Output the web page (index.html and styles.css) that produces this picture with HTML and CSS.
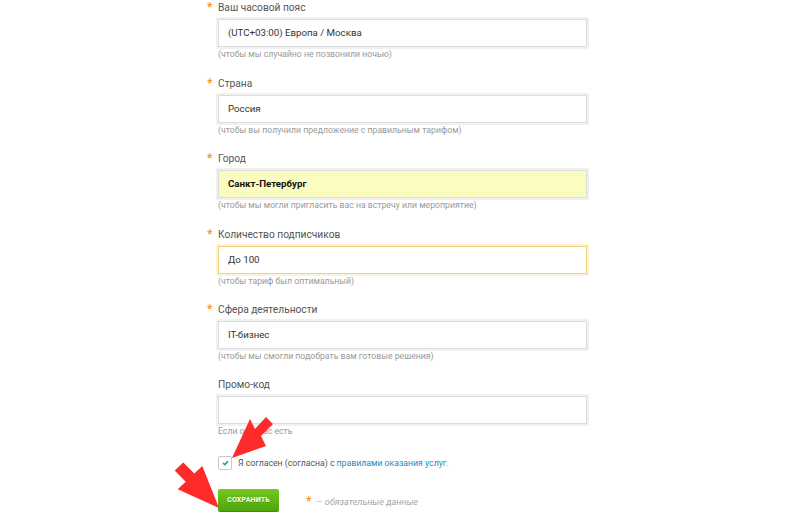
FILE: index.html
```html
<!DOCTYPE html>
<html lang="ru">
<head>
    <meta charset="UTF-8">
    <meta name="viewport" content="width=device-width, initial-scale=1.0">
    <title>Профиль</title>
    <link rel="stylesheet" href="styles.css">
</head>
<body>

    <form class="profile-form">
        <div class="field">
            <div class="field-label required">Ваш часовой пояс</div>
            <div class="field-input">(UTC+03:00) Европа / Москва</div>
            <div class="field-hint">(чтобы мы случайно не позвонили ночью)</div>
        </div>
        <div class="field">
            <div class="field-label required">Страна</div>
            <div class="field-input">Россия</div>
            <div class="field-hint">(чтобы вы получили предложение с правильным тарифом)</div>
        </div>
        <div class="field">
            <div class="field-label required">Город</div>
            <div class="field-input autofill">Санкт-Петербург</div>
            <div class="field-hint">(чтобы мы могли пригласить вас на встречу или мероприятие)</div>
        </div>
        <div class="field">
            <div class="field-label required">Количество подписчиков</div>
            <div class="field-input focused">До 100</div>
            <div class="field-hint">(чтобы тариф был оптимальный)</div>
        </div>
        <div class="field">
            <div class="field-label required">Сфера деятельности</div>
            <div class="field-input">IT-бизнес</div>
            <div class="field-hint">(чтобы мы смогли подобрать вам готовые решения)</div>
        </div>
        <div class="field">
            <div class="field-label">Промо-код</div>
            <div class="field-input"></div>
            <div class="field-hint">Если он у вас есть</div>
        </div>

        <label class="agree">
            <span class="checkbox">
                <svg width="7" height="6" viewBox="0 0 7 6"><path d="M1 3 L2.8 4.6 L6 1.2" fill="none" stroke="#20a85a" stroke-width="1.6"/></svg>
            </span>
            Я согласен (согласна) с&nbsp;<a href="#" class="rules-link">правилами оказания услуг.</a>
        </label>

        <div class="form-footer">
            <button type="button" class="save-button">СОХРАНИТЬ</button>
            <span class="required-note"><span class="star">*</span> — обязательные данные</span>
        </div>
    </form>

    <!-- red annotation arrows drawn over the form -->
    <svg class="arrows" width="800" height="517" viewBox="0 0 800 517">
        <polygon fill="#ff2a2a" points="219,508 177.7,489.3 185.7,481.7 174.7,470.6 183.3,462.4 194.3,473.5 202.3,465.9"/>
        <polygon fill="#ff2a2a" points="232,458 250,419 255,429 266,417 273,424 261,436 266,446"/>
    </svg>

</body>
</html>
```

FILE: styles.css
```css
body {
    margin: 0;
    background-color: #fff;
    font-family: Roboto, "Noto Sans", Arial, sans-serif;
    color: #444;
}

.profile-form {
    width: 369px;
    margin: 0 auto;
    padding-left: 5px;
}

.field {
    height: 75.5px;
}

.field-label {
    font-size: 10.2px;
    line-height: 14px;
    color: #555;
    margin-bottom: 4px;
}

.required::before {
    content: "*";
    display: inline-block;
    width: 11px;
    margin-left: -11px;
    color: #f7941d;
    font-weight: bold;
    font-size: 12px;
}

.field-input {
    box-sizing: border-box;
    height: 28px;
    border: 1px solid #dcdcdc;
    box-shadow: 0 0 0 2px #f1f1f1;
    padding: 0 9px;
    font-size: 9.7px;
    line-height: 26px;
    color: #333;
    background-color: #fff;
}

/* browser autofill look */
.field-input.autofill {
    background-color: #fafcc0;
    font-weight: bold;
    color: #111;
}

.field-input.focused {
    border-color: #f3d27f;
    box-shadow: 0 0 0 2px #fdf3d8;
}

.field-hint {
    font-size: 8.7px;
    line-height: 14px;
    color: #9a9a9a;
}

.agree {
    display: flex;
    align-items: center;
    margin-top: 3px;
    font-size: 8.7px;
    color: #555;
}

.checkbox {
    box-sizing: border-box;
    width: 14px;
    height: 14px;
    border: 1px solid #c8c8c8;
    border-radius: 2px;
    display: flex;
    align-items: center;
    justify-content: center;
    margin-right: 6px;
}

.rules-link {
    color: #1a8cc0;
    text-decoration: none;
}

.form-footer {
    display: flex;
    align-items: center;
    margin-top: 19px;
}

.save-button {
    width: 61px;
    height: 23px;
    border: none;
    border-bottom: 1px solid #3d8e0a;
    border-radius: 2px;
    background: linear-gradient(#74c81f, #4ea50c);
    color: #fff;
    font-family: Roboto, Arial, sans-serif;
    font-size: 7px;
    font-weight: bold;
    letter-spacing: 0.2px;
    text-shadow: 0 1px 0 rgba(0, 0, 0, 0.2);
    padding: 0;
    cursor: pointer;
}

.required-note {
    margin-left: 27px;
    font-size: 9.1px;
    font-style: italic;
    color: #a8a8a8;
}

.required-note .star {
    color: #f7941d;
    font-weight: bold;
    font-style: normal;
    font-size: 12px;
    margin-right: 2px;
}

.arrows {
    position: absolute;
    top: 0;
    left: 0;
    pointer-events: none;
}
```
